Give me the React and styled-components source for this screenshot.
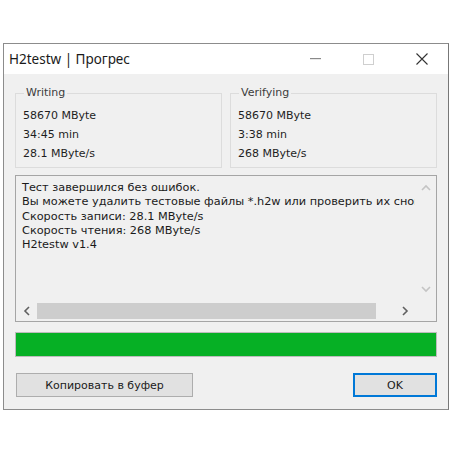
import React from 'react';
import styled, { createGlobalStyle } from 'styled-components';

const GlobalStyle = createGlobalStyle`
  html, body {
    margin: 0;
    padding: 0;
    background: #ffffff;
  }
  body {
    font-family: "DejaVu Sans", "Liberation Sans", sans-serif;
  }
`;

const Chevron = ({ dir, color = '#606060' }) => {
  const paths = {
    left: 'M6 1 L2 5 L6 9',
    right: 'M2 1 L6 5 L2 9',
    up: 'M1 6 L5 2 L9 6',
    down: 'M1 2 L5 6 L9 2',
  };
  const horiz = dir === 'left' || dir === 'right';
  return (
    <svg width={horiz ? 8 : 10} height={horiz ? 10 : 8} viewBox={horiz ? '0 0 8 10' : '0 0 10 8'}>
      <path d={paths[dir]} fill="none" stroke={color} strokeWidth="1.6" />
    </svg>
  );
};

const memoLines = [
  'Тест завершился без ошибок.',
  'Вы можете удалить тестовые файлы *.h2w или проверить их снова.',
  'Скорость записи: 28.1 MByte/s',
  'Скорость чтения: 268 MByte/s',
  'H2testw v1.4',
];

const App = () => {
  return (
    <St.Page>
      <GlobalStyle />
      <St.Window>
        <St.TitleBar>
          <St.Title>H2testw | Прогрес</St.Title>
          <St.Controls>
            <St.CtrlButton>
              <svg width="11" height="2" viewBox="0 0 11 2">
                <rect width="11" height="1.2" fill="#8a8a8a" />
              </svg>
            </St.CtrlButton>
            <St.CtrlButton>
              <svg width="11" height="11" viewBox="0 0 11 11">
                <rect x="0.5" y="0.5" width="10" height="10" fill="none" stroke="#cfcfcf" />
              </svg>
            </St.CtrlButton>
            <St.CtrlButton>
              <svg width="12" height="12" viewBox="0 0 12 12">
                <path d="M0.5 0.5 L11.5 11.5 M11.5 0.5 L0.5 11.5" stroke="#333" strokeWidth="1.1" />
              </svg>
            </St.CtrlButton>
          </St.Controls>
        </St.TitleBar>

        <St.Body>
          <St.Groups>
            <St.GroupBox>
              <St.Legend>Writing</St.Legend>
              <St.Value>58670 MByte</St.Value>
              <St.Value>34:45 min</St.Value>
              <St.Value>28.1 MByte/s</St.Value>
            </St.GroupBox>
            <St.GroupBox>
              <St.Legend>Verifying</St.Legend>
              <St.Value>58670 MByte</St.Value>
              <St.Value>3:38 min</St.Value>
              <St.Value>268 MByte/s</St.Value>
            </St.GroupBox>
          </St.Groups>

          <St.Memo>
            <St.MemoMain>
              <St.MemoText>
                {memoLines.map((l) => (
                  <St.MemoLine key={l}>{l}</St.MemoLine>
                ))}
              </St.MemoText>
              <St.VScroll>
                <Chevron dir="up" color="#c4c4c4" />
                <Chevron dir="down" color="#c4c4c4" />
              </St.VScroll>
            </St.MemoMain>
            <St.HScrollRow>
              <St.HScroll>
                <St.Arrow><Chevron dir="left" /></St.Arrow>
                <St.Thumb />
                <St.Arrow><Chevron dir="right" /></St.Arrow>
              </St.HScroll>
              <St.Corner />
            </St.HScrollRow>
          </St.Memo>

          <St.Progress />

          <St.Buttons>
            <St.Button>Копировать в буфер</St.Button>
            <St.Button $primary>OK</St.Button>
          </St.Buttons>
        </St.Body>
      </St.Window>
    </St.Page>
  );
};

export default App;

const St = {
  Page: styled.div`
    width: 452px;
    height: 452px;
    padding: 43px 3px 0 3px;
    box-sizing: border-box;
    background: #ffffff;
  `,

  Window: styled.div`
    width: 446px;
    height: 367px;
    box-sizing: border-box;
    border: 1px solid #8c8c8c;
    border-right-color: #777;
    background: #f0f0f0;
    display: flex;
    flex-direction: column;
  `,

  TitleBar: styled.div`
    height: 30px;
    flex-shrink: 0;
    background: #ffffff;
    display: flex;
    align-items: center;
    justify-content: space-between;
    padding-left: 5px;
  `,

  Title: styled.span`
    font-family: "Noto Sans", "Open Sans", sans-serif;
    font-size: 13.5px;
    color: #1a1a1a;
  `,

  Controls: styled.div`
    display: flex;
    height: 100%;
  `,

  CtrlButton: styled.div`
    width: 53px;
    height: 100%;
    display: flex;
    align-items: center;
    justify-content: center;
  `,

  Body: styled.div`
    flex: 1;
    display: flex;
    flex-direction: column;
    padding: 19px 11px 0 11px;
  `,

  Groups: styled.div`
    display: grid;
    grid-template-columns: 207px 207px;
    gap: 8px;
  `,

  GroupBox: styled.div`
    position: relative;
    height: 75px;
    box-sizing: border-box;
    border: 1px solid #dcdcdc;
    padding: 15px 0 0 7px;
    display: flex;
    flex-direction: column;
    gap: 4.5px;
  `,

  Legend: styled.span`
    position: absolute;
    top: -8px;
    left: 8px;
    padding: 0 2px;
    background: #f0f0f0;
    font-size: 11px;
    line-height: 14px;
    color: #3c3c3c;
  `,

  Value: styled.div`
    font-size: 11px;
    line-height: 14.5px;
    color: #1e1e1e;
  `,

  Memo: styled.div`
    margin-top: 7px;
    height: 147px;
    box-sizing: border-box;
    border: 1px solid #a5a5a5;
    background: #f0f0f0;
    display: flex;
    flex-direction: column;
    overflow: hidden;
  `,

  MemoMain: styled.div`
    flex: 1;
    display: flex;
    min-height: 0;
  `,

  MemoText: styled.div`
    flex: 1;
    overflow: hidden;
    padding: 5px 0 0 6px;
  `,

  MemoLine: styled.div`
    font-size: 11.3px;
    line-height: 14.3px;
    color: #1a1a1a;
    white-space: pre;
  `,

  VScroll: styled.div`
    width: 21px;
    flex-shrink: 0;
    display: flex;
    flex-direction: column;
    align-items: center;
    justify-content: space-between;
    padding: 8px 0 8px;
  `,

  HScrollRow: styled.div`
    height: 20px;
    display: flex;
    flex-shrink: 0;
  `,

  HScroll: styled.div`
    flex: 1;
    display: flex;
    align-items: stretch;
    padding: 2px 0;
  `,

  Arrow: styled.div`
    width: 21px;
    display: flex;
    align-items: center;
    justify-content: center;
  `,

  Thumb: styled.div`
    flex: 1;
    margin-right: 18px;
    background: #cdcdcd;
  `,

  Corner: styled.div`
    width: 21px;
  `,

  Progress: styled.div`
    margin-top: 10px;
    height: 25px;
    box-sizing: border-box;
    border: 1px solid #bcbcbc;
    background: #06b025;
  `,

  Buttons: styled.div`
    margin-top: 16px;
    display: flex;
    justify-content: space-between;
  `,

  Button: styled.div`
    width: ${({ $primary }) => ($primary ? '84px' : '177px')};
    height: 24px;
    box-sizing: border-box;
    margin-left: ${({ $primary }) => ($primary ? '0' : '1px')};
    border: ${({ $primary }) => ($primary ? '2px solid #0078d7' : '1px solid #adadad')};
    background: #e1e1e1;
    display: flex;
    align-items: center;
    justify-content: center;
    font-size: 11px;
    color: #1a1a1a;
  `,
};
